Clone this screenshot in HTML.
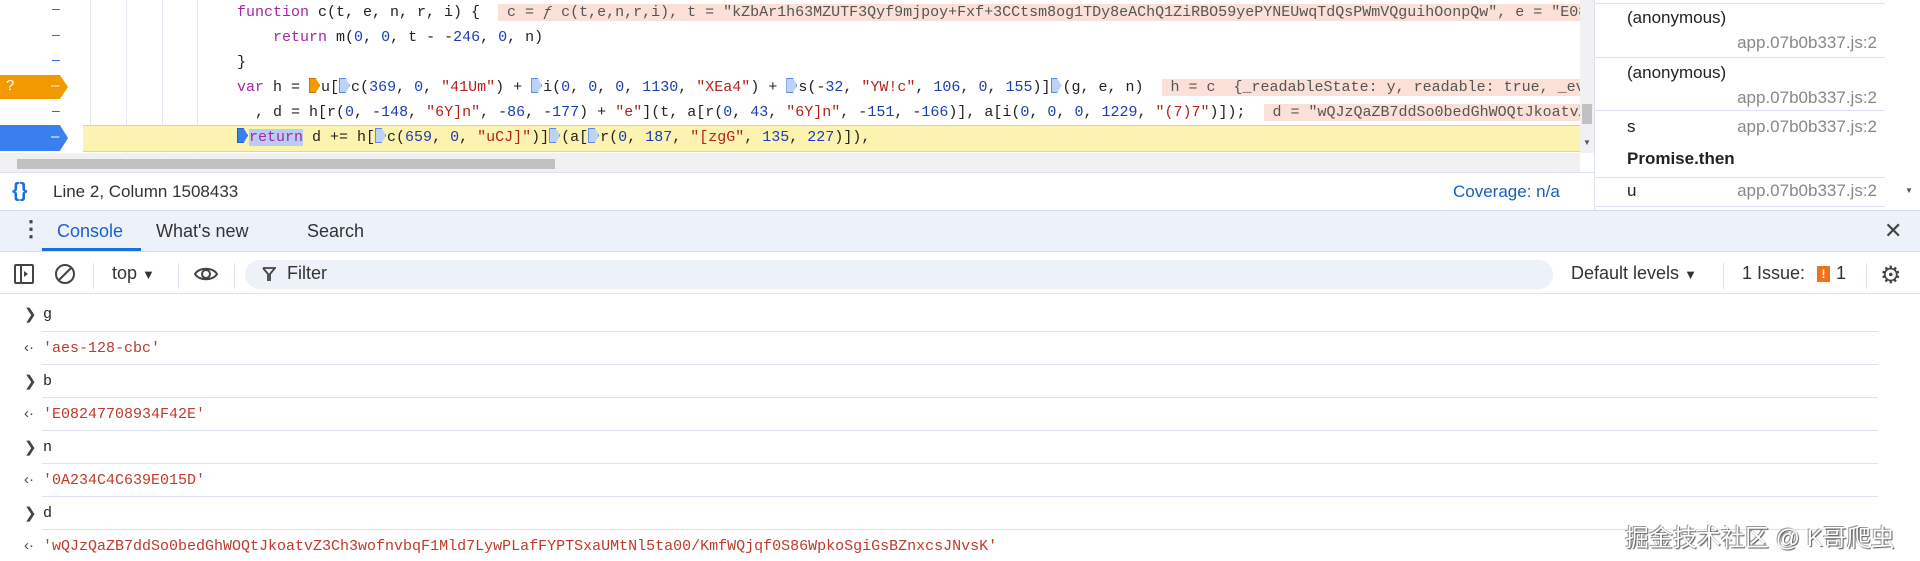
<!DOCTYPE html>
<html><head><meta charset="utf-8"><style>
*{margin:0;padding:0;box-sizing:border-box}
body{width:1920px;height:561px;overflow:hidden;background:#fff;font-family:"Liberation Sans",sans-serif;position:relative;color:#222}
.abs{position:absolute}
.code{font-family:"Liberation Mono",monospace;font-size:15px;white-space:pre;line-height:25px}
.k{color:#a626a4}.s{color:#b5221c}.n{color:#1c3fb0}.p{background:#fbe0d8;color:#555}
.mk{display:inline-block;width:11px;height:15px;background:#bcd3f5;border:1px solid #5a8be0;clip-path:polygon(0 0,60% 0,100% 50%,60% 100%,0 100%);vertical-align:-2px;margin-right:1px}
.dash{position:absolute;left:52px;color:#1a5fd0;font-size:14px}
.vl{position:absolute;top:0;height:153px;width:1px;background:#e3e8f3}
.cs{position:absolute;left:1595px;width:290px;font-size:17px}
.cs .a{position:absolute;left:32px}
.cs .f{position:absolute;right:8px;color:#888}
.hl{position:absolute;height:1px;background:#dde2ef}
.con{font-family:"Liberation Mono",monospace;font-size:15px;position:absolute;left:43px}
.str{color:#c0392b}
.chev{position:absolute;left:24px;color:#444;font-size:15px}
</style></head><body>
<!-- code area -->
<div class="vl" style="left:90px"></div><div class="vl" style="left:126px"></div><div class="vl" style="left:162px"></div><div class="vl" style="left:197px"></div>
<div class="abs" style="left:83px;top:125px;width:1497px;height:27px;background:#fdf3b0;border-top:1px solid #f0d860;border-bottom:1px solid #f0d860"></div>
<div class="dash" style="top:0px">–</div><div class="dash" style="top:26px">–</div><div class="dash" style="top:51px">–</div>
<div class="abs" style="left:0;top:75px;width:68px;height:24px;background:#f29900;clip-path:polygon(0 0,88% 0,100% 50%,88% 100%,0 100%);color:#fff;font-size:15px;padding:2px 6px">?<span style="position:absolute;left:51px">–</span></div>
<div class="dash" style="top:102px">–</div>
<div class="abs" style="left:0;top:125px;width:68px;height:26px;background:#3a7ff0;clip-path:polygon(0 0,88% 0,100% 50%,88% 100%,0 100%);color:#fff;font-size:15px"><span style="position:absolute;left:51px;top:3px">–</span></div>
<div class="abs code" style="left:237px;top:0px;width:1343px;overflow:hidden"><span class="k">function</span> c(t, e, n, r, i) {  <span class="p"> c = <i>ƒ</i> c(t,e,n,r,i), t = "kZbAr1h63MZUTF3Qyf9mjpoy+Fxf+3CCtsm8og1TDy8eAChQ1ZiRBO59yePYNEUwqTdQsPWmVQguihOonpQw", e = "E08247708934F42E"      </span>
    <span class="k">return</span> m(<span class="n">0</span>, <span class="n">0</span>, t - -<span class="n">246</span>, <span class="n">0</span>, n)
}
<span class="k">var</span> h = <span class="mk" style="background:#f29900;border-color:#c77a00"></span>u[<span class="mk"></span>c(<span class="n">369</span>, <span class="n">0</span>, <span class="s">"41Um"</span>) + <span class="mk"></span>i(<span class="n">0</span>, <span class="n">0</span>, <span class="n">0</span>, <span class="n">1130</span>, <span class="s">"XEa4"</span>) + <span class="mk"></span>s(-<span class="n">32</span>, <span class="s">"YW!c"</span>, <span class="n">106</span>, <span class="n">0</span>, <span class="n">155</span>)]<span class="mk"></span>(g, e, n)  <span class="p"> h = c  {_readableState: y, readable: true, _events: {…}} </span>
  , d = h[r(<span class="n">0</span>, -<span class="n">148</span>, <span class="s">"6Y]n"</span>, -<span class="n">86</span>, -<span class="n">177</span>) + <span class="s">"e"</span>](t, a[r(<span class="n">0</span>, <span class="n">43</span>, <span class="s">"6Y]n"</span>, -<span class="n">151</span>, -<span class="n">166</span>)], a[i(<span class="n">0</span>, <span class="n">0</span>, <span class="n">0</span>, <span class="n">1229</span>, <span class="s">"(7)7"</span>)]);  <span class="p"> d = "wQJzQaZB7ddSo0bedGhWOQtJkoatvZ3Ch3wo"   </span>
<span class="mk" style="background:#3a7ff0;border-color:#2a60c0"></span><span style="background:#b9cdf3" class="k">return</span> d += h[<span class="mk"></span>c(<span class="n">659</span>, <span class="n">0</span>, <span class="s">"uCJ]"</span>)]<span class="mk"></span>(a[<span class="mk"></span>r(<span class="n">0</span>, <span class="n">187</span>, <span class="s">"[zgG"</span>, <span class="n">135</span>, <span class="n">227</span>)]),</div>
<!-- scrollbars -->
<div class="abs" style="left:0;top:153px;width:1580px;height:19px;background:#f1f1f1"></div>
<div class="abs" style="left:17px;top:159px;width:538px;height:10px;background:#c1c1c1"></div>
<div class="abs" style="left:1580px;top:0;width:14px;height:153px;background:#f1f1f1"></div>
<div class="abs" style="left:1582px;top:104px;width:10px;height:20px;background:#c1c1c1"></div>
<div class="abs" style="left:1583px;top:138px;font-size:8px;color:#555">▼</div>
<!-- call stack -->
<div class="abs" style="left:1594px;top:0;width:1px;height:210px;background:#dde2ef"></div>
<div class="cs" style="top:0;height:210px">
<div class="hl" style="left:0;top:3px;width:290px"></div>
<div class="a" style="top:8px">(anonymous)</div><div class="f" style="top:33px">app.07b0b337.js:2</div>
<div class="hl" style="left:0;top:57px;width:290px"></div>
<div class="a" style="top:63px">(anonymous)</div><div class="f" style="top:88px">app.07b0b337.js:2</div>
<div class="hl" style="left:0;top:110px;width:290px"></div>
<div class="a" style="top:117px">s</div><div class="f" style="top:117px">app.07b0b337.js:2</div>
<div class="a" style="top:149px;font-weight:bold;color:#222">Promise.then</div>
<div class="hl" style="left:0;top:177px;width:290px"></div>
<div class="a" style="top:181px">u</div><div class="f" style="top:181px">app.07b0b337.js:2</div>
<div class="hl" style="left:0;top:206px;width:290px"></div>
</div>
<div class="abs" style="left:1905px;top:186px;font-size:8px;color:#555">▼</div>
<!-- status bar -->
<div class="abs" style="left:0;top:172px;width:1594px;height:1px;background:#dde2ef"></div>
<div class="abs" style="left:12px;top:180px;font-size:20px;color:#1a6fe0;font-weight:bold">{}</div>
<div class="abs" style="left:53px;top:182px;font-size:17px;color:#333">Line 2, Column 1508433</div>
<div class="abs" style="left:1453px;top:182px;font-size:17px;color:#1a5fb4">Coverage: n/a</div>
<!-- tab bar -->
<div class="abs" style="left:0;top:210px;width:1920px;height:42px;background:#edf2fa;border-top:1px solid #d6dded;border-bottom:1px solid #d6dded"></div>
<div class="abs" style="left:20px;top:216px;font-size:22px;color:#444;font-weight:bold">⋮</div>
<div class="abs" style="left:57px;top:221px;font-size:18px;color:#1a5fd0">Console</div>
<div class="abs" style="left:42px;top:248px;width:99px;height:3px;background:#1a6fe0"></div>
<div class="abs" style="left:156px;top:221px;font-size:18px;color:#333">What's new</div>
<div class="abs" style="left:307px;top:221px;font-size:18px;color:#333">Search</div>
<div class="abs" style="left:1884px;top:218px;font-size:22px;color:#444">✕</div>
<!-- toolbar -->
<svg class="abs" style="left:12px;top:262px" width="24" height="24" viewBox="0 0 24 24"><rect x="3" y="3" width="18" height="18" rx="1" fill="none" stroke="#444" stroke-width="2"/><line x1="9" y1="3" x2="9" y2="21" stroke="#444" stroke-width="2"/><path d="M12 9l4 3-4 3z" fill="#444"/></svg>
<svg class="abs" style="left:53px;top:262px" width="24" height="24" viewBox="0 0 24 24"><circle cx="12" cy="12" r="9" fill="none" stroke="#444" stroke-width="2"/><line x1="6" y1="18" x2="18" y2="6" stroke="#444" stroke-width="2"/></svg>
<div class="abs" style="left:93px;top:263px;width:1px;height:26px;background:#dde2ef"></div>
<div class="abs" style="left:112px;top:263px;font-size:18px;color:#333">top <span style="font-size:13px">▼</span></div>
<div class="abs" style="left:178px;top:263px;width:1px;height:26px;background:#dde2ef"></div>
<svg class="abs" style="left:193px;top:262px" width="26" height="24" viewBox="0 0 26 24"><path d="M2 12C6 5 20 5 24 12C20 19 6 19 2 12Z" fill="none" stroke="#444" stroke-width="2"/><circle cx="13" cy="12" r="4" fill="none" stroke="#444" stroke-width="2"/></svg>
<div class="abs" style="left:234px;top:263px;width:1px;height:26px;background:#dde2ef"></div>
<div class="abs" style="left:245px;top:260px;width:1308px;height:29px;background:#edf1f8;border-radius:15px"></div>
<svg class="abs" style="left:262px;top:266px" width="14" height="16" viewBox="0 0 14 16"><path d="M1 2h12L8 8v7M6 15V8L1 2" fill="none" stroke="#444" stroke-width="1.8"/></svg>
<div class="abs" style="left:287px;top:263px;font-size:18px;color:#333">Filter</div>
<div class="abs" style="left:1571px;top:263px;font-size:18px;color:#333">Default levels <span style="font-size:13px">▼</span></div>
<div class="abs" style="left:1723px;top:263px;width:1px;height:26px;background:#dde2ef"></div>
<div class="abs" style="left:1742px;top:263px;font-size:18px;color:#333">1 Issue:</div>
<div class="abs" style="left:1817px;top:266px;width:13px;height:16px;background:#f0701c;color:#fff;font-size:12px;font-weight:bold;text-align:center;line-height:16px">!</div>
<div class="abs" style="left:1836px;top:263px;font-size:18px;color:#333">1</div>
<div class="abs" style="left:1866px;top:263px;width:1px;height:26px;background:#dde2ef"></div>
<div class="abs" style="left:1880px;top:261px;font-size:24px;color:#444">⚙</div>
<div class="abs" style="left:0;top:293px;width:1920px;height:1px;background:#dde2ef"></div>
<!-- console rows -->
<div class="chev" style="top:305px">❯</div><div class="con" style="top:306px">g</div>
<div class="hl" style="left:42px;top:331px;width:1836px"></div>
<div class="chev" style="top:339px">‹·</div><div class="con str" style="top:340px">'aes-128-cbc'</div>
<div class="hl" style="left:42px;top:364px;width:1836px"></div>
<div class="chev" style="top:372px">❯</div><div class="con" style="top:373px">b</div>
<div class="hl" style="left:42px;top:397px;width:1836px"></div>
<div class="chev" style="top:405px">‹·</div><div class="con str" style="top:406px">'E08247708934F42E'</div>
<div class="hl" style="left:42px;top:430px;width:1836px"></div>
<div class="chev" style="top:438px">❯</div><div class="con" style="top:439px">n</div>
<div class="hl" style="left:42px;top:463px;width:1836px"></div>
<div class="chev" style="top:471px">‹·</div><div class="con str" style="top:472px">'0A234C4C639E015D'</div>
<div class="hl" style="left:42px;top:496px;width:1836px"></div>
<div class="chev" style="top:504px">❯</div><div class="con" style="top:505px">d</div>
<div class="hl" style="left:42px;top:529px;width:1836px"></div>
<div class="chev" style="top:537px">‹·</div><div class="con str" style="top:538px">'wQJzQaZB7ddSo0bedGhWOQtJkoatvZ3Ch3wofnvbqF1Mld7LywPLafFYPTSxaUMtNl5ta00/KmfWQjqf0S86WpkoSgiGsBZnxcsJNvsK'</div>
<!-- watermark -->
<div class="abs" style="left:1625px;top:518px;font-size:24px;color:#fff;font-family:'Liberation Sans','Noto Sans CJK SC',sans-serif;text-shadow:1px 1px 1px #555,-1px -1px 0 #999">掘金技术社区 @ K哥爬虫</div>
</body></html>
